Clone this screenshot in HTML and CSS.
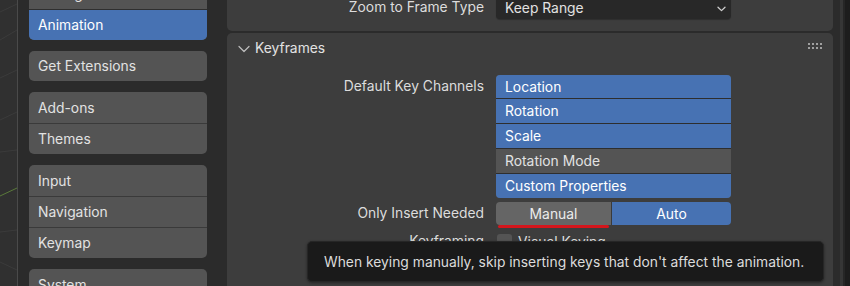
FILE: index.html
```html
<!DOCTYPE html>
<html lang="en">
<head>
<meta charset="utf-8">
<title>Preferences - Animation</title>
<link rel="stylesheet" href="styles.css">
</head>
<body>
<div class="app">
  <div class="viewport">
    <svg class="grid" width="17" height="286" viewBox="0 0 17 286">
      <g stroke="#3b3b3b" stroke-width="1" fill="none">
        <line x1="0" y1="12" x2="17" y2="4"/>
        <line x1="0" y1="40" x2="17" y2="30"/>
        <line x1="0" y1="78" x2="17" y2="70"/>
        <line x1="0" y1="120" x2="17" y2="112"/>
        <line x1="0" y1="152" x2="17" y2="150"/>
        <line x1="0" y1="232" x2="17" y2="230"/>
        <line x1="0" y1="262" x2="17" y2="270"/>
      </g>
      <line x1="0" y1="196" x2="17" y2="188" stroke="#5a7a3a" stroke-width="1"/>
    </svg>
  </div>
  <div class="divider"></div>
  <nav class="sidebar">
    <div class="group first">
      <div class="item">Editing</div>
      <div class="item active">Animation</div>
    </div>
    <div class="group">
      <div class="item short">Get Extensions</div>
    </div>
    <div class="group">
      <div class="item">Add-ons</div>
      <div class="item">Themes</div>
    </div>
    <div class="group">
      <div class="item">Input</div>
      <div class="item">Navigation</div>
      <div class="item">Keymap</div>
    </div>
    <div class="group">
      <div class="item">System</div>
    </div>
  </nav>
  <main class="main">
    <section class="panel top-panel">
      <div class="prop-row">
        <span class="prop-label">Zoom to Frame Type</span>
        <div class="dropdown">
          <span>Keep Range</span>
          <svg class="dd-chevron" width="9" height="6" viewBox="0 0 9 6"><path d="M1 1.2 L4.5 4.6 L8 1.2" stroke="#cfcfcf" stroke-width="1.3" fill="none" stroke-linecap="round" stroke-linejoin="round"/></svg>
        </div>
      </div>
    </section>
    <section class="panel keyframes">
      <header class="panel-header">
        <svg class="hdr-chevron" width="12" height="8" viewBox="0 0 12 8"><path d="M1 1.5 L6 6.5 L11 1.5" stroke="#bdbdbd" stroke-width="1.2" fill="none" stroke-linecap="round" stroke-linejoin="round"/></svg>
        <span class="panel-title">Keyframes</span>
        <svg class="grip" width="15" height="8" viewBox="0 0 15 8">
          <g fill="#a0a0a0">
            <rect x="0" y="0" width="2" height="2"/><rect x="4" y="0" width="2" height="2"/><rect x="8" y="0" width="2" height="2"/><rect x="12" y="0" width="2" height="2"/>
            <rect x="0" y="4" width="2" height="2"/><rect x="4" y="4" width="2" height="2"/><rect x="8" y="4" width="2" height="2"/><rect x="12" y="4" width="2" height="2"/>
          </g>
        </svg>
      </header>
      <div class="panel-body">
        <div class="prop-row list-row">
          <span class="prop-label">Default Key Channels</span>
          <div class="toggle-list">
            <div class="toggle on">Location</div>
            <div class="toggle on">Rotation</div>
            <div class="toggle on">Scale</div>
            <div class="toggle">Rotation Mode</div>
            <div class="toggle on">Custom Properties</div>
          </div>
        </div>
        <div class="prop-row seg-row">
          <span class="prop-label">Only Insert Needed</span>
          <div class="segmented">
            <div class="seg hover">Manual</div>
            <div class="seg on">Auto</div>
          </div>
        </div>
        <div class="prop-row check-row">
          <span class="prop-label">Keyframing</span>
          <div class="check"><span class="box"></span><span>Visual Keying</span></div>
        </div>
      </div>
    </section>
  </main>
  <div class="edge">
    <div class="edge-a"></div>
    <div class="edge-b"></div>
    <div class="edge-c"></div>
  </div>
  <div class="underline"></div>
  <div class="tooltip">When keying manually, skip inserting keys that don't affect the animation.</div>
</div>
</body>
</html>
```
FILE: styles.css
```css
* { box-sizing: border-box; }
html, body {
  margin: 0;
  padding: 0;
  width: 850px;
  height: 286px;
  overflow: hidden;
  background: #2b2b2b;
}
body {
  font-family: Inter, "Noto Sans", "DejaVu Sans", sans-serif;
  font-size: 13.85px;
  color: #dedede;
}
.app {
  position: relative;
  display: flex;
  width: 850px;
  height: 286px;
  overflow: hidden;
}
.viewport {
  width: 17px;
  flex: none;
  background: #303030;
}
.grid { display: block; }
.divider {
  width: 1px;
  flex: none;
  background: #4a4a4a;
}
.sidebar {
  width: 204px;
  flex: none;
  background: #2b2b2b;
  padding-left: 11px;
  padding-right: 15px;
  display: flex;
  flex-direction: column;
  gap: 11px;
}
.group {
  border-radius: 5px;
  overflow: hidden;
  background: #545454;
  flex: none;
}
.group.first { margin-top: -22px; }
.item {
  height: 31px;
  display: flex;
  align-items: center;
  padding-left: 9px;
  color: #e2e2e2;
  border-top: 1px solid #3a3a3a;
}
.item:first-child { border-top: none; }
.item.short { height: 30px; }
.item.active {
  background: #4772b3;
  color: #ffffff;
  border-top-color: #2f2f2f;
}
.main {
  width: 618px;
  flex: none;
  background: #2b2b2b;
  padding-left: 5px;
  padding-right: 7px;
  display: flex;
  flex-direction: column;
  gap: 2px;
}
.panel {
  background: #3d3d3d;
  border-radius: 5px;
  flex: none;
}
.top-panel {
  margin-top: -10px;
  padding: 6px 0 12px 0;
}
.prop-row {
  display: grid;
  grid-template-columns: 257px 235px;
  column-gap: 12px;
  align-items: start;
}
.prop-label {
  text-align: right;
  height: 23px;
  line-height: 23px;
  color: #dcdcdc;
  white-space: nowrap;
}
.dropdown {
  height: 23px;
  background: #282828;
  border-radius: 4px;
  display: flex;
  align-items: center;
  justify-content: space-between;
  padding: 0 5px 0 9px;
  color: #e2e2e2;
  box-shadow: 0 1px 1px rgba(0,0,0,0.25);
}
.dd-chevron { display: block; margin-top: 2px; }
.keyframes { flex: 1; border-bottom-left-radius: 0; border-bottom-right-radius: 0; }
.panel-header {
  height: 30px;
  display: flex;
  align-items: center;
  padding-left: 11px;
  padding-right: 10px;
}
.hdr-chevron { display: block; margin-right: 5px; margin-top: 1px; }
.panel-title { flex: 1; color: #e2e2e2; }
.grip { display: block; margin-top: -3px; }
.panel-body {
  padding-top: 12px;
  display: flex;
  flex-direction: column;
}
.toggle-list {
  border-radius: 4px;
  overflow: hidden;
  background: #545454;
}
.toggle {
  height: 25px;
  display: flex;
  align-items: center;
  padding-left: 9px;
  border-top: 1px solid #2e2e2e;
  color: #e2e2e2;
}
.toggle:first-child { height: 23px; border-top: none; }
.toggle.on { background: #4772b3; color: #ffffff; }
.seg-row { margin-top: 4px; }
.segmented {
  display: flex;
  height: 23px;
  border-radius: 4px;
  overflow: hidden;
}
.seg {
  display: flex;
  align-items: center;
  justify-content: center;
  color: #ececec;
}
.seg.hover { width: 116px; background: #656565; border-right: 1px solid #3a3a3a; }
.seg.on { flex: 1; background: #4772b3; color: #ffffff; }
.check-row { margin-top: 5px; }
.check {
  display: flex;
  align-items: center;
  gap: 6px;
  height: 23px;
  padding-left: 1px;
}
.check .box {
  width: 15px;
  height: 15px;
  border-radius: 3px;
  background: #545454;
}
.edge {
  flex: 1;
  display: flex;
}
.edge-a { width: 3px; background: #363636; }
.edge-b { width: 2px; background: #262626; }
.edge-c { flex: 1; background: #1d1d1d; }
.underline {
  position: absolute;
  left: 498px;
  top: 225px;
  width: 111px;
  height: 3px;
  border-radius: 2px;
  background: #d4161c;
}
.tooltip {
  position: absolute;
  left: 307px;
  top: 241px;
  width: 517px;
  height: 41px;
  background: #1a1a1a;
  border: 1px solid #262626;
  border-radius: 5px;
  padding-left: 16px;
  display: flex;
  align-items: center;
  color: #dcdcdc;
  white-space: nowrap;
  box-shadow: 0 1px 3px rgba(0,0,0,0.4);
}
```
